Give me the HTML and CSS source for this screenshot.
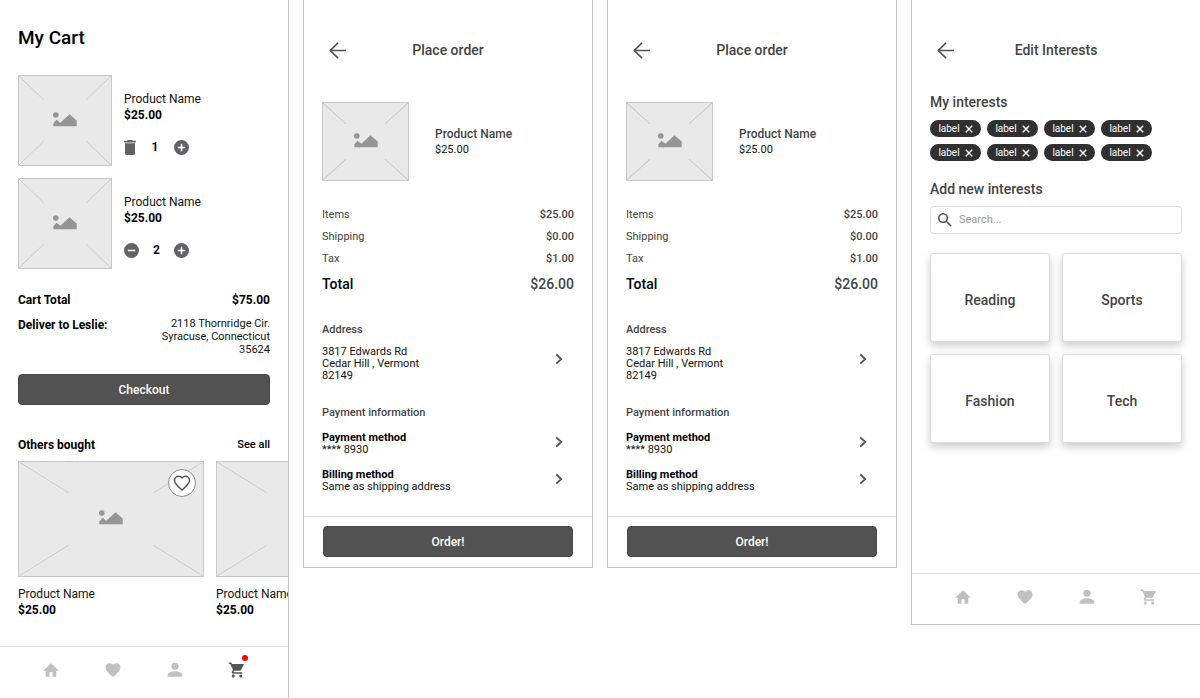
FILE: index.html
```html
<!DOCTYPE html>
<html lang="en">
    <head>
        <title>Shop wireframes</title>
        <meta charset="UTF-8">
        <meta name="viewport" content="width=device-width">
        <link rel="stylesheet" href="styles.css">
    </head>
    <body>

        <!-- shared icons -->
        <svg class="sprite" aria-hidden="true">
            <symbol id="cross" viewBox="0 0 100 100" preserveAspectRatio="none">
                <path d="M0 0L27 27M100 0L73 27M0 100L27 73M100 100L73 73" fill="none" stroke="#c9c9c9" vector-effect="non-scaling-stroke"/>
            </symbol>
            <symbol id="picture" viewBox="0 0 24 15">
                <circle cx="2.8" cy="3" r="2.8"/>
                <path d="M.3 14.3V11.5L3.5 7.8 7.3 10.8 16.5 2.2 23.7 8.6V14.3z"/>
            </symbol>
            <symbol id="trash" viewBox="5 3 14 18">
                <path d="M6 19c0 1.100.900 2 2 2h8c1.100 0 2-.900 2-2V7H6v12z"/>
                <path d="M19 4h-3.500l-1-1h-5l-1 1H5v2h14V4z"/>
            </symbol>
            <symbol id="plus" viewBox="2 2 20 20">
                <path d="M12 2a10 10 0 1 0 0 20 10 10 0 0 0 0-20zm5 11h-4v4h-2v-4H7v-2h4V7h2v4h4v2z"/>
            </symbol>
            <symbol id="minus" viewBox="2 2 20 20">
                <path d="M12 2a10 10 0 1 0 0 20 10 10 0 0 0 0-20zm5 11H7v-2h10v2z"/>
            </symbol>
            <symbol id="back" viewBox="0 0 17 17">
                <path d="M17 8.500H1.500M9 .8L1.300 8.500 9 16.200" fill="none" stroke="#50545a" stroke-width="1.700"/>
            </symbol>
            <symbol id="chevron" viewBox="0 0 8 12">
                <path d="M1.300 1.300L6.300 6l-5 4.700" fill="none" stroke="#50545a" stroke-width="1.800"/>
            </symbol>
            <symbol id="home" viewBox="0 0 24 24">
                <path d="M10 21v-6h4v6h5v-8h3.500L12 3 1.500 13H5v8z"/>
            </symbol>
            <symbol id="heart" viewBox="0 0 24 24">
                <path d="M12 21.350l-1.450-1.320C5.400 15.360 2 12.280 2 8.500 2 5.420 4.420 3 7.500 3c1.740 0 3.410.810 4.500 2.090C13.090 3.810 14.760 3 16.500 3 19.580 3 22 5.420 22 8.500c0 3.780-3.400 6.860-8.550 11.540L12 21.350z"/>
            </symbol>
            <symbol id="person" viewBox="0 0 24 24">
                <circle cx="12" cy="7" r="4.700"/>
                <path d="M12 13.500c-3.700 0-9.700 1.600-9.700 5V21h19.400v-2.500c0-3.400-6-5-9.700-5z"/>
            </symbol>
            <symbol id="cart" viewBox="0 0 24 24">
                <path d="M7 18c-1.100 0-1.990.900-1.990 2S5.900 22 7 22s2-.900 2-2-.900-2-2-2zM1 2v2h2l3.600 7.590-1.350 2.450c-.160.280-.250.610-.250.960 0 1.100.900 2 2 2h12v-2H7.420c-.140 0-.250-.110-.250-.250l.030-.120.900-1.630h7.450c.750 0 1.410-.410 1.750-1.030l3.580-6.490A1 1 0 0 0 20 4H5.210l-.940-2H1zm16 16c-1.100 0-1.990.900-1.990 2s.890 2 1.990 2 2-.900 2-2-.900-2-2-2z"/>
            </symbol>
            <symbol id="search" viewBox="3 3 18 18">
                <path d="M15.500 14h-.790l-.280-.270A6.500 6.500 0 1 0 13.730 14.430l.270.280v.790l5 4.990L20.490 19l-4.990-5zm-6 0a4.500 4.500 0 1 1 0-9 4.500 4.500 0 0 1 0 9z"/>
            </symbol>
            <symbol id="close" viewBox="0 0 8 8">
                <path d="M.8.8l6.400 6.400M7.200.8L.8 7.200" fill="none" stroke="#fff" stroke-width="1.500"/>
            </symbol>
        </svg>

        <main class="board">

            <section class="screen cart">
                <h1>My Cart</h1>
                <ul class="items">
                    <li class="item">
                        <div class="photo"><svg class="cross"><use href="#cross"/></svg><svg class="picture"><use href="#picture"/></svg></div>
                        <div class="details">
                            <p>Product Name</p>
                            <p class="price">$25.00</p>
                            <div class="quantity">
                                <button type="button" aria-label="Remove"><svg class="trash"><use href="#trash"/></svg></button>
                                <span>1</span>
                                <button type="button" aria-label="Add one"><svg class="round"><use href="#plus"/></svg></button>
                            </div>
                        </div>
                    </li>
                    <li class="item">
                        <div class="photo"><svg class="cross"><use href="#cross"/></svg><svg class="picture"><use href="#picture"/></svg></div>
                        <div class="details">
                            <p>Product Name</p>
                            <p class="price">$25.00</p>
                            <div class="quantity">
                                <button type="button" aria-label="Remove one"><svg class="round"><use href="#minus"/></svg></button>
                                <span>2</span>
                                <button type="button" aria-label="Add one"><svg class="round"><use href="#plus"/></svg></button>
                            </div>
                        </div>
                    </li>
                </ul>
                <dl class="summary">
                    <div><dt>Cart Total</dt><dd class="price">$75.00</dd></div>
                    <div><dt>Deliver to Leslie:</dt><dd class="address">2118 Thornridge Cir.<br>Syracuse, Connecticut<br>35624</dd></div>
                </dl>
                <button type="button" class="main-button">Checkout</button>
                <div class="others-head">
                    <h2>Others bought</h2>
                    <a href="#">See all</a>
                </div>
                <ul class="others">
                    <li>
                        <div class="photo wide">
                            <svg class="cross"><use href="#cross"/></svg><svg class="picture"><use href="#picture"/></svg>
                            <button type="button" class="like" aria-label="Like"><svg><use href="#heart"/></svg></button>
                        </div>
                        <p>Product Name</p>
                        <p class="price">$25.00</p>
                    </li>
                    <li>
                        <div class="photo wide"><svg class="cross"><use href="#cross"/></svg><svg class="picture"><use href="#picture"/></svg></div>
                        <p>Product Name</p>
                        <p class="price">$25.00</p>
                    </li>
                </ul>
                <nav class="tabs">
                    <a href="#" aria-label="Home"><svg><use href="#home"/></svg></a>
                    <a href="#" aria-label="Favourites"><svg><use href="#heart"/></svg></a>
                    <a href="#" aria-label="Profile"><svg><use href="#person"/></svg></a>
                    <a href="#" class="active" aria-label="Cart"><svg><use href="#cart"/></svg><span class="dot"></span></a>
                </nav>
            </section>

            <section class="screen order">
                <header class="topbar">
                    <a href="#" aria-label="Back"><svg><use href="#back"/></svg></a>
                    <h1>Place order</h1>
                </header>
                <div class="product">
                    <div class="photo small"><svg class="cross"><use href="#cross"/></svg><svg class="picture"><use href="#picture"/></svg></div>
                    <div>
                        <p class="name">Product Name</p>
                        <p class="cost">$25.00</p>
                    </div>
                </div>
                <dl class="costs">
                    <div><dt>Items</dt><dd>$25.00</dd></div>
                    <div><dt>Shipping</dt><dd>$0.00</dd></div>
                    <div><dt>Tax</dt><dd>$1.00</dd></div>
                    <div class="total"><dt>Total</dt><dd>$26.00</dd></div>
                </dl>
                <h2>Address</h2>
                <a href="#" class="row">
                    <span>3817 Edwards Rd<br>Cedar Hill , Vermont<br>82149</span>
                    <svg><use href="#chevron"/></svg>
                </a>
                <h2>Payment information</h2>
                <a href="#" class="row method">
                    <span><b>Payment method</b><br>**** 8930</span>
                    <svg><use href="#chevron"/></svg>
                </a>
                <a href="#" class="row method">
                    <span><b>Billing method</b><br>Same as shipping address</span>
                    <svg><use href="#chevron"/></svg>
                </a>
                <footer>
                    <button type="button" class="main-button">Order!</button>
                </footer>
            </section>

            <section class="screen order">
                <header class="topbar">
                    <a href="#" aria-label="Back"><svg><use href="#back"/></svg></a>
                    <h1>Place order</h1>
                </header>
                <div class="product">
                    <div class="photo small"><svg class="cross"><use href="#cross"/></svg><svg class="picture"><use href="#picture"/></svg></div>
                    <div>
                        <p class="name">Product Name</p>
                        <p class="cost">$25.00</p>
                    </div>
                </div>
                <dl class="costs">
                    <div><dt>Items</dt><dd>$25.00</dd></div>
                    <div><dt>Shipping</dt><dd>$0.00</dd></div>
                    <div><dt>Tax</dt><dd>$1.00</dd></div>
                    <div class="total"><dt>Total</dt><dd>$26.00</dd></div>
                </dl>
                <h2>Address</h2>
                <a href="#" class="row">
                    <span>3817 Edwards Rd<br>Cedar Hill , Vermont<br>82149</span>
                    <svg><use href="#chevron"/></svg>
                </a>
                <h2>Payment information</h2>
                <a href="#" class="row method">
                    <span><b>Payment method</b><br>**** 8930</span>
                    <svg><use href="#chevron"/></svg>
                </a>
                <a href="#" class="row method">
                    <span><b>Billing method</b><br>Same as shipping address</span>
                    <svg><use href="#chevron"/></svg>
                </a>
                <footer>
                    <button type="button" class="main-button">Order!</button>
                </footer>
            </section>

            <section class="screen interests">
                <header class="topbar">
                    <a href="#" aria-label="Back"><svg><use href="#back"/></svg></a>
                    <h1>Edit Interests</h1>
                </header>
                <h2>My interests</h2>
                <div class="chips">
                    <button type="button">label<svg><use href="#close"/></svg></button>
                    <button type="button">label<svg><use href="#close"/></svg></button>
                    <button type="button">label<svg><use href="#close"/></svg></button>
                    <button type="button">label<svg><use href="#close"/></svg></button>
                    <button type="button">label<svg><use href="#close"/></svg></button>
                    <button type="button">label<svg><use href="#close"/></svg></button>
                    <button type="button">label<svg><use href="#close"/></svg></button>
                    <button type="button">label<svg><use href="#close"/></svg></button>
                </div>
                <h2><label for="search-box">Add new interests</label></h2>
                <div class="search">
                    <svg><use href="#search"/></svg>
                    <input type="search" id="search-box" placeholder="Search...">
                </div>
                <div class="topics">
                    <button type="button">Reading</button>
                    <button type="button">Sports</button>
                    <button type="button">Fashion</button>
                    <button type="button">Tech</button>
                </div>
                <nav class="tabs">
                    <a href="#" aria-label="Home"><svg><use href="#home"/></svg></a>
                    <a href="#" aria-label="Favourites"><svg><use href="#heart"/></svg></a>
                    <a href="#" aria-label="Profile"><svg><use href="#person"/></svg></a>
                    <a href="#" aria-label="Cart"><svg><use href="#cart"/></svg></a>
                </nav>
            </section>

        </main>
    </body>
</html>
```
FILE: styles.css
```css
*
{
    box-sizing: border-box;
}
body
{
    margin: 0;
    overflow-x: hidden;
    background: #fff;
    color: #111;
    font: 12px/16px Roboto, "Liberation Sans", sans-serif;
}
h1, h2, p, ul, dl, dd
{
    margin: 0;
    padding: 0;
}
li
{
    list-style: none;
}
a
{
    color: inherit;
    text-decoration: none;
}
button, input
{
    font: inherit;
    color: inherit;
}
button
{
    padding: 0;
    border: none;
    background: none;
    cursor: pointer;
}
svg
{
    display: block;
    flex: none;
    fill: currentColor;
}
.sprite
{
    position: absolute;
    width: 0;
    height: 0;
}
.board
{
    display: grid;
    grid-template-columns: repeat(4, minmax(0, 1fr));
    gap: 14px;
    align-items: start;
    margin: 0 -1px;
}
.screen
{
    padding: 0 18px;
    border: 1px solid #c4c4c4;
    border-top: none;
}

/* grey picture boxes */
.photo
{
    position: relative;
    display: flex;
    flex: none;
    align-items: center;
    justify-content: center;
    width: 94px;
    height: 91px;
    border: 1px solid #c9c9c9;
    background: #e9e9e9;
}
.photo.wide
{
    width: 186px;
    height: 116px;
    margin-bottom: 9px;
}
.photo.small
{
    width: 87px;
    height: 79px;
}
.cross
{
    position: absolute;
    inset: 0;
    width: 100%;
    height: 100%;
}
.picture
{
    width: 24px;
    height: 15px;
    margin-bottom: 3px;
    color: #959595;
}
.price
{
    color: #000;
    font-weight: 700;
}
.main-button
{
    display: block;
    width: 100%;
    height: 31px;
    border: 1px solid #484848;
    border-radius: 4px;
    background: #525252;
    color: #fff;
    font-weight: 500;
}

/* cart */
.cart
{
    min-height: 100vh;
    padding-top: 26px;
    border-bottom: none;
}
.cart h1
{
    margin-bottom: 25px;
    color: #000;
    font-size: 19px;
    font-weight: 500;
    line-height: 24px;
}
.items
{
    display: grid;
    gap: 12px;
}
.item
{
    display: flex;
    gap: 12px;
}
.details
{
    padding-top: 16px;
}
.quantity
{
    display: flex;
    align-items: center;
    justify-content: space-between;
    width: 65px;
    margin-top: 16px;
    font-weight: 700;
}
.quantity svg
{
    color: #5f6368;
}
.trash
{
    width: 12px;
    height: 15px;
}
.round
{
    width: 15px;
    height: 15px;
}
.summary
{
    display: grid;
    gap: 9px;
    margin: 23px 0 18px;
}
.summary div
{
    display: flex;
    justify-content: space-between;
}
.summary dt, .others-head h2
{
    color: #000;
    font-size: 12px;
    font-weight: 700;
}
.summary .address
{
    font-size: 11px;
    line-height: 13px;
    text-align: right;
}
.others-head
{
    display: flex;
    align-items: center;
    justify-content: space-between;
    margin: 32px 0 8px;
}
.others-head h2
{
    line-height: 16px;
}
.others-head a
{
    color: #000;
    font-size: 11px;
    font-weight: 500;
}
.others
{
    display: flex;
    gap: 12px;
    margin-right: -18px;
    overflow: hidden;
    white-space: nowrap;
}
.like
{
    position: absolute;
    top: 7px;
    right: 7px;
    display: grid;
    place-items: center;
    width: 28px;
    height: 28px;
    border: 1px solid #8c8c8c;
    border-radius: 50%;
    background: #fff;
}
.like svg
{
    width: 18px;
    height: 18px;
    fill: none;
    stroke: #50545a;
    stroke-width: 2;
    overflow: visible;
}

/* bottom tabs */
.tabs
{
    display: flex;
    margin: 28px -18px 0;
    padding: 14px 20px 18px;
    border-top: 1px solid #dcdcdc;
}
.tabs a
{
    position: relative;
    display: flex;
    flex: 1;
    justify-content: center;
    color: #c0c0c0;
}
.tabs a.active
{
    color: #555;
}
.tabs svg
{
    width: 18px;
    height: 18px;
}
.dot
{
    position: absolute;
    top: -6px;
    left: calc(50% + 5px);
    width: 6px;
    height: 6px;
    border-radius: 50%;
    background: #f00;
}

/* place order */
.topbar
{
    display: grid;
    grid-template-columns: 17px 1fr 17px;
    align-items: center;
    padding: 42px 7px 0;
    color: #444;
}
.topbar svg
{
    width: 17px;
    height: 17px;
}
.topbar h1
{
    font-size: 14px;
    font-weight: 500;
    line-height: 17px;
    text-align: center;
}
.product
{
    display: flex;
    gap: 26px;
    align-items: center;
    margin: 43px 0 26px;
}
.name
{
    color: #444;
    font-weight: 500;
}
.cost
{
    font-size: 11px;
}
.costs
{
    display: grid;
    gap: 6px;
    font-size: 11px;
}
.costs div
{
    display: flex;
    justify-content: space-between;
    color: #444;
}
.costs dd
{
    font-weight: 500;
}
.costs .total
{
    margin-top: 3px;
    font-size: 14px;
    font-weight: 500;
}
.total dt
{
    color: #000;
}
.order h2
{
    margin: 30px 0 8px;
    color: #444;
    font-size: 11px;
    font-weight: 500;
    line-height: 16px;
}
.row
{
    display: flex;
    align-items: flex-start;
    justify-content: space-between;
    padding-right: 11px;
    font-size: 11px;
    line-height: 12px;
}
.row svg
{
    width: 8px;
    height: 12px;
    margin-top: 7px;
}
.row + h2
{
    margin: 23px 0 11px;
}
.row b
{
    color: #000;
    font-weight: 700;
}
.method + .method
{
    margin-top: 13px;
}
.method svg
{
    margin-top: 4px;
}
footer
{
    margin: 23px -18px 0;
    padding: 9px 19px 10px;
    border-top: 1px solid #dcdcdc;
}

/* interests */
.interests h2
{
    margin: 34px 0 9px;
    color: #444;
    font-size: 14px;
    font-weight: 500;
    line-height: 18px;
}
.chips
{
    display: flex;
    flex-wrap: wrap;
    gap: 7px 6px;
}
.chips button
{
    display: flex;
    gap: 5px;
    align-items: center;
    justify-content: center;
    width: 51px;
    height: 17px;
    border-radius: 9px;
    background: #303030;
    color: #fff;
    font-size: 10px;
}
.chips svg
{
    width: 8px;
    height: 8px;
}
.chips + h2
{
    margin: 19px 0 8px;
}
.search
{
    display: flex;
    gap: 7px;
    align-items: center;
    height: 28px;
    padding: 0 7px;
    border: 1px solid #dcdcdc;
    border-radius: 4px;
}
.search svg
{
    width: 14px;
    height: 14px;
    color: #50545a;
}
.search input
{
    flex: 1;
    min-width: 0;
    padding: 0;
    border: none;
    outline: none;
    background: none;
    font-size: 11px;
}
.search input::placeholder
{
    color: #999;
}
.topics
{
    display: grid;
    grid-template-columns: 1fr 1fr;
    gap: 12px;
    margin-top: 19px;
}
.topics button
{
    height: 89px;
    padding-top: 4px;
    border: 1px solid #dcdcdc;
    border-radius: 3px;
    background: #fff;
    box-shadow: 0 4px 8px rgba(0, 0, 0, 0.2);
    color: #444;
    font-size: 14px;
    font-weight: 500;
}
.interests .tabs
{
    margin-top: 130px;
}
```
